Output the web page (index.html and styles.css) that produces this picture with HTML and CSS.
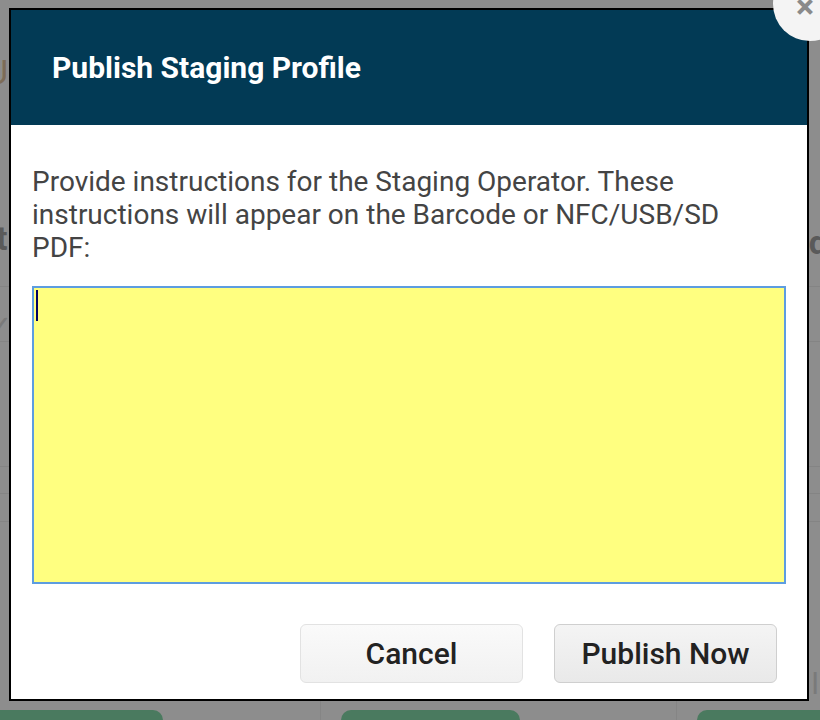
FILE: index.html
```html
<!DOCTYPE html>
<html>
<head>
<meta charset="utf-8">
<link rel="stylesheet" href="styles.css">
</head>
<body>
<div class="page">
  <div class="page-row r1"><span class="ghost ghost-u">U</span><span class="ghost ghost-t">t</span><span class="ghost ghost-d">d</span></div>
  <div class="page-row r2"><span class="ghost ghost-check">✓</span></div>
  <div class="page-row r3"></div>
  <div class="page-row r4"></div>
  <div class="page-row r5"></div>
  <div class="page-row r6"><span class="ghost ghost-li">li</span></div>
  <div class="page-foot">
    <div class="foot-cell"><span class="green-btn g1"></span></div>
    <div class="foot-cell"><span class="green-btn g2"></span></div>
    <div class="foot-cell"><span class="green-btn g3"></span></div>
  </div>
</div>

<div class="modal">
  <div class="modal-header">
    <h1 class="modal-title">Publish Staging Profile</h1>
  </div>
  <div class="modal-body">
    <p class="modal-text">Provide instructions for the Staging Operator. These instructions will appear on the Barcode or NFC/USB/SD PDF:</p>
    <div class="textarea"><span class="caret"></span></div>
  </div>
  <div class="modal-footer">
    <button class="btn btn-light">Cancel</button>
    <button class="btn">Publish Now</button>
  </div>
</div>
<div class="close-btn"><span class="close-x">×</span></div>
</body>
</html>
```

FILE: styles.css
```css
html, body {
  margin: 0;
  padding: 0;
}
body {
  width: 820px;
  height: 720px;
  overflow: hidden;
  background: #8d8d8d;
  font-family: Roboto, "Liberation Sans", sans-serif;
  position: relative;
}
.page {
  display: flex;
  flex-direction: column;
  height: 720px;
}
.page-row {
  position: relative;
  border-bottom: 1px solid #848484;
  color: #5a5a5a;
  font-size: 34px;
  font-weight: 700;
  flex-shrink: 0;
}
.r1 { height: 286px; }
.r2 { height: 54px; }
.r3 { height: 124px; }
.r4 { height: 26px; }
.r5 { height: 27px; }
.r6 { flex: 1; border-bottom: none; }
.ghost { display: block; position: absolute; line-height: 40px; }
.ghost-u { left: -14px; top: 52px; color: #7d6c58; font-weight: 400; }
.ghost-t { left: -4px; top: 218px; }
.ghost-d { right: -8px; top: 222px; }
.ghost-check { left: -8px; top: 18px; font-size: 22px; color: #7a7a7a; }
.ghost-li { right: -6px; top: 142px; font-size: 30px; font-weight: 400; color: #7a7a7a; }
.page-foot {
  display: grid;
  grid-template-columns: 320px 356px 144px;
  height: 20px;
  flex-shrink: 0;
}
.foot-cell {
  border-left: 1px solid #858585;
}
.foot-cell:first-child { border-left: none; }
.green-btn {
  display: block;
  margin-top: 10px;
  height: 20px;
  background: #4a7a5f;
  border-radius: 10px 10px 0 0;
}
.g1 { margin-left: -10px; width: 173px; }
.g2 { margin-left: 20px; width: 179px; }
.g3 { margin-left: 20px; width: 140px; }

.modal {
  position: absolute;
  left: 9px;
  top: 8px;
  width: 796px;
  height: 689px;
  border: 2px solid #000;
  background: #fff;
  display: flex;
  flex-direction: column;
}
.modal-header {
  height: 115px;
  background: #023a55;
  display: flex;
  align-items: center;
  padding-left: 41px;
  flex-shrink: 0;
}
.modal-title {
  margin: 0;
  color: #fff;
  font-size: 30px;
  font-weight: 700;
}
.modal-body {
  padding: 40px 21px 0 21px;
  flex: 1;
}
.modal-text {
  margin: 0 0 22px 0;
  max-width: 720px;
  font-size: 28px;
  line-height: 33px;
  color: #444;
}
.textarea {
  height: 294px;
  border: 2px solid #5d9de0;
  background: #ffff80;
  position: relative;
}
.caret {
  position: absolute;
  left: 2px;
  top: 2px;
  width: 2px;
  height: 31px;
  background: #000060;
}
.modal-footer {
  display: flex;
  justify-content: flex-end;
  gap: 31px;
  padding: 0 30px 16px 0;
}
.btn {
  width: 223px;
  height: 59px;
  border: 1px solid #cfcfcf;
  border-radius: 6px;
  background: linear-gradient(#f4f4f4, #e9e9e9);
  font-family: Roboto, "Liberation Sans", sans-serif;
  font-size: 30px;
  font-weight: 500;
  color: #222;
}
.btn-light {
  border-color: #e2e2e2;
  background: linear-gradient(#fafafa, #f1f1f1);
}
.close-btn {
  position: absolute;
  left: 773px;
  top: -33px;
  width: 74px;
  height: 74px;
  border-radius: 50%;
  background: #f4f4f4;
}
.close-x {
  position: absolute;
  left: 23px;
  top: 22px;
  font-size: 34px;
  line-height: 34px;
  font-weight: 700;
  color: #8a8a8a;
}
```
